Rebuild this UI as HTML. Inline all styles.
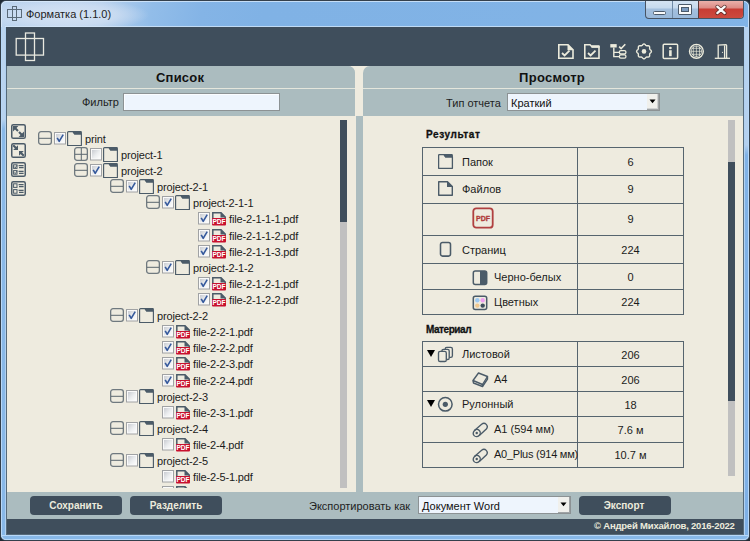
<!DOCTYPE html>
<html><head><meta charset="utf-8"><title>Форматка</title>
<style>
html,body{margin:0;padding:0;width:750px;height:541px;overflow:hidden;background:#202a34}
body{position:relative;font-family:"Liberation Sans", sans-serif}
</style></head><body>
<div style="position:absolute;left:0;top:0;width:750px;height:541px;background:#202a34"></div><div style="position:absolute;left:0px;top:0px;width:750px;height:541px;box-sizing:border-box;border:1px solid #34404c;border-radius:6px 6px 6px 6px;background:radial-gradient(ellipse 82px 17px at 66px 14px,rgba(214,228,244,0.95) 0%,rgba(206,222,242,0.8) 60%,rgba(200,218,240,0) 100%),linear-gradient(100deg,#bcd4ee 0px,#b6d0ed 100px,#92bde9 150px,#84b4e6 200px,#80b2e5 260px,#82b4e6 100%)"></div><div style="position:absolute;left:1px;top:1px;width:748px;height:539px;box-sizing:border-box;border:1px solid rgba(220,236,252,0.75);border-radius:5px 5px 5px 5px"></div><div style="position:absolute;left:1px;top:27px;width:5px;height:508px;background:linear-gradient(180deg,#bcd5ef 0px,#b8d3ef 92px,#8ab9e8 102px,#88b8e8 100%);border-left:1px solid #b8d8f8;border-right:1px solid #b0d0f0;box-sizing:border-box"></div><div style="position:absolute;left:744px;top:27px;width:5px;height:508px;background:linear-gradient(180deg,#b8d3ef 0px,#b4d0ee 118px,#80b2e6 128px,#7eb0e6 100%);border-left:1px solid #b0d0f0;border-right:1px solid #b8d8f8;box-sizing:border-box"></div><div style="position:absolute;left:1px;top:535px;width:748px;height:5px;background:#88b8e8;border-top:1px solid #b8d8f8;border-bottom:1px solid #b8d8f8;border-left:1px solid #b8d8f8;border-right:1px solid #b8d8f8;box-sizing:border-box;border-radius:0 0 5px 5px"></div><div style="position:absolute;left:5px;top:26px;width:740px;height:1px;background:rgba(214,232,250,0.75)"></div><svg style="position:absolute;left:7px;top:6px;" width="16" height="16" viewBox="0 0 16 16"><g fill="none" stroke="#5a6a78" stroke-width="1"><rect x="0.5" y="3.5" width="14" height="8"/><rect x="5.5" y="0.5" width="4" height="14"/></g></svg><div style="position:absolute;left:26px;top:9px;font-size:11px;font-weight:400;color:#1e1e1e;white-space:nowrap;line-height:1;">Форматка (1.1.0)</div><div style="position:absolute;left:645px;top:1px;width:99px;height:18px;box-sizing:border-box;border:1px solid #485464;border-top:none;border-radius:0 0 4px 4px;overflow:hidden;background:linear-gradient(180deg,#d4e3f2 0px,#c6daee 7px,#a4c0de 8px,#9ab9da 100%)"></div><div style="position:absolute;left:672px;top:1px;width:1px;height:17px;background:#6f8aa6"></div><div style="position:absolute;left:698px;top:1px;width:1px;height:17px;background:#5a3a3a"></div><div style="position:absolute;left:699px;top:1px;width:44px;height:17px;border-radius:0 0 3px 0;background:linear-gradient(180deg,#eab0aa 0px,#dc8a84 7px,#c83c34 8px,#cc4a3e 100%)"></div><div style="position:absolute;left:653px;top:11px;width:13px;height:4px;box-sizing:border-box;background:#fafafa;border:1px solid #4c5a6a;border-radius:1.5px"></div><div style="position:absolute;left:678px;top:4px;width:14px;height:11px;box-sizing:border-box;border:1px solid #4c5a6a;background:#fafafa;border-radius:1px"></div><div style="position:absolute;left:681px;top:7px;width:8px;height:5px;box-sizing:border-box;border:1px solid #4c5a6a;background:#7d9cc0"></div><svg style="position:absolute;left:714px;top:3px;" width="14" height="14" viewBox="0 0 14 14"><path d="M3.3 3.7 L10.7 10.1 M10.7 3.7 L3.3 10.1" stroke="#4a2622" stroke-width="3.9" stroke-linecap="round" stroke-opacity="0.85"/><path d="M3.3 3.7 L10.7 10.1 M10.7 3.7 L3.3 10.1" stroke="#fbfbfb" stroke-width="2.3" stroke-linecap="round"/></svg><div style="position:absolute;left:6px;top:27px;width:738px;height:508px;background:#eeebdf;box-sizing:border-box;border:1px solid #566a7a"></div><div style="position:absolute;left:6px;top:27px;width:738px;height:39px;background:#3f4e5c"></div><svg style="position:absolute;left:14px;top:31px;" width="32" height="32" viewBox="0 0 32 32"><g fill="none" stroke="#e9e9e0" stroke-width="1.3"><rect x="2.2" y="7.5" width="27.3" height="16.6"/><rect x="11.5" y="2" width="9" height="27.5"/></g></svg><svg style="position:absolute;left:557px;top:43px;" width="18" height="17" viewBox="0 0 18 17"><g fill="none" stroke="#ecebdc" stroke-width="1.6"><path d="M1.8 1.8 H11 L16 6.8 V15.2 H1.8 Z"/></g><path d="M10.5 1 L16.8 7.3 L10.5 7.3 Z" fill="#ecebdc"/><path d="M5 10 L7.6 12.5 L12.5 7.6" fill="none" stroke="#ecebdc" stroke-width="1.8"/></svg><svg style="position:absolute;left:583px;top:43px;" width="18" height="17" viewBox="0 0 18 17"><g fill="none" stroke="#ecebdc" stroke-width="1.6"><path d="M1.8 1.8 H7 L9 3.8 H16 V15.2 H1.8 Z"/></g><rect x="8.5" y="2.2" width="8" height="2.6" fill="#ecebdc"/><path d="M5 10 L7.6 12.5 L12.5 7.6" fill="none" stroke="#ecebdc" stroke-width="1.8"/></svg><svg style="position:absolute;left:609px;top:43px;" width="18" height="17" viewBox="0 0 18 17"><rect x="1.3" y="1.1" width="6.4" height="3.4" fill="#ecebdc"/><path d="M4.8 4.5 V13.6 H10.5 M4.8 9.4 H10.5" fill="none" stroke="#ecebdc" stroke-width="1.4"/><rect x="10.4" y="7.7" width="6.5" height="3.3" rx="1.4" fill="none" stroke="#ecebdc" stroke-width="1.3"/><rect x="10.4" y="11.9" width="6.5" height="3.3" rx="1.4" fill="none" stroke="#ecebdc" stroke-width="1.3"/><path d="M10.2 3.6 L12.1 5.6 L16.3 1.3" fill="none" stroke="#ecebdc" stroke-width="1.6"/></svg><svg style="position:absolute;left:635px;top:43px;" width="18" height="17" viewBox="0 0 18 17"><path d="M9.00 0.98 L9.29 1.02 L9.57 1.12 L9.84 1.29 L10.09 1.49 L10.33 1.73 L10.54 1.97 L10.75 2.21 L10.95 2.41 L11.15 2.57 L11.36 2.69 L11.60 2.76 L11.86 2.79 L12.14 2.78 L12.45 2.77 L12.78 2.75 L13.11 2.74 L13.44 2.77 L13.74 2.85 L14.02 2.97 L14.25 3.15 L14.43 3.38 L14.55 3.66 L14.63 3.96 L14.66 4.29 L14.65 4.62 L14.63 4.95 L14.62 5.26 L14.61 5.54 L14.64 5.80 L14.71 6.04 L14.83 6.25 L14.99 6.45 L15.19 6.65 L15.43 6.86 L15.67 7.07 L15.91 7.31 L16.11 7.56 L16.28 7.83 L16.38 8.11 L16.42 8.40 L16.38 8.69 L16.28 8.97 L16.11 9.24 L15.91 9.49 L15.67 9.73 L15.43 9.94 L15.19 10.15 L14.99 10.35 L14.83 10.55 L14.71 10.76 L14.64 11.00 L14.61 11.26 L14.62 11.54 L14.63 11.85 L14.65 12.18 L14.66 12.51 L14.63 12.84 L14.55 13.14 L14.43 13.42 L14.25 13.65 L14.02 13.83 L13.74 13.95 L13.44 14.03 L13.11 14.06 L12.78 14.05 L12.45 14.03 L12.14 14.02 L11.86 14.01 L11.60 14.04 L11.36 14.11 L11.15 14.23 L10.95 14.39 L10.75 14.59 L10.54 14.83 L10.33 15.07 L10.09 15.31 L9.84 15.51 L9.57 15.68 L9.29 15.78 L9.00 15.82 L8.71 15.78 L8.43 15.68 L8.16 15.51 L7.91 15.31 L7.67 15.07 L7.46 14.83 L7.25 14.59 L7.05 14.39 L6.85 14.23 L6.64 14.11 L6.40 14.04 L6.14 14.01 L5.86 14.02 L5.55 14.03 L5.22 14.05 L4.89 14.06 L4.56 14.03 L4.26 13.95 L3.98 13.83 L3.75 13.65 L3.57 13.42 L3.45 13.14 L3.37 12.84 L3.34 12.51 L3.35 12.18 L3.37 11.85 L3.38 11.54 L3.39 11.26 L3.36 11.00 L3.29 10.76 L3.17 10.55 L3.01 10.35 L2.81 10.15 L2.57 9.94 L2.33 9.73 L2.09 9.49 L1.89 9.24 L1.72 8.97 L1.62 8.69 L1.58 8.40 L1.62 8.11 L1.72 7.83 L1.89 7.56 L2.09 7.31 L2.33 7.07 L2.57 6.86 L2.81 6.65 L3.01 6.45 L3.17 6.25 L3.29 6.04 L3.36 5.80 L3.39 5.54 L3.38 5.26 L3.37 4.95 L3.35 4.62 L3.34 4.29 L3.37 3.96 L3.45 3.66 L3.57 3.38 L3.75 3.15 L3.98 2.97 L4.26 2.85 L4.56 2.77 L4.89 2.74 L5.22 2.75 L5.55 2.77 L5.86 2.78 L6.14 2.79 L6.40 2.76 L6.64 2.69 L6.85 2.57 L7.05 2.41 L7.25 2.21 L7.46 1.97 L7.67 1.73 L7.91 1.49 L8.16 1.29 L8.43 1.12 L8.71 1.02 Z" fill="none" stroke="#ecebdc" stroke-width="1.35" stroke-linejoin="round"/><circle cx="9" cy="8.4" r="2.3" fill="#ecebdc"/></svg><svg style="position:absolute;left:662px;top:43px;" width="17" height="17" viewBox="0 0 17 17"><rect x="1.2" y="1.2" width="14.4" height="14.4" rx="1" fill="none" stroke="#ecebdc" stroke-width="1.5"/><circle cx="8.4" cy="5" r="1.35" fill="#ecebdc"/><rect x="7.1" y="7.2" width="2.6" height="6" fill="#ecebdc"/></svg><svg style="position:absolute;left:688px;top:43px;" width="17" height="17" viewBox="0 0 17 17"><defs><clipPath id="gc"><circle cx="8.4" cy="8.3" r="5.8"/></clipPath></defs><g fill="none" stroke="#ecebdc"><circle cx="8.4" cy="8.3" r="6.9" stroke-width="1.4"/><circle cx="8.4" cy="8.3" r="5.2" stroke-width="0.7"/><g clip-path="url(#gc)" stroke-width="0.75" stroke-opacity="0.9"><path d="M5.3 0 V17 M8.4 0 V17 M11.5 0 V17 M0 5.3 H17 M0 8.3 H17 M0 11.3 H17"/></g></g></svg><svg style="position:absolute;left:714px;top:43px;" width="17" height="17" viewBox="0 0 17 17"><g fill="none" stroke="#ecebdc" stroke-width="1.3"><path d="M4.2 15.3 V2.2 L12 1.6 L12.6 2.4 V15.3"/><path d="M0.8 15.3 H16"/><path d="M10.6 2.4 V15.3"/></g><circle cx="8.5" cy="9.3" r="0.6" fill="#ecebdc"/></svg><div style="position:absolute;left:7px;top:66px;width:348px;height:50px;background:#abbcbf;border-top-right-radius:7px"></div><div style="position:absolute;left:363px;top:66px;width:380px;height:50px;background:#abbcbf;border-top-left-radius:7px"></div><div style="position:absolute;left:355px;top:66px;width:8px;height:50px;background:#eeebdf"></div><div style="position:absolute;left:7px;top:66px;width:348px;height:50px;background:#abbcbf;border-top-right-radius:7px"></div><div style="position:absolute;left:7px;top:88px;width:348px;height:1px;background:#e4e6dc"></div><div style="position:absolute;left:363px;top:88px;width:380px;height:1px;background:#e4e6dc"></div><div style="position:absolute;left:156px;top:71px;font-size:13px;font-weight:700;color:#111;white-space:nowrap;line-height:1;letter-spacing:0.2px">Список</div><div style="position:absolute;left:519px;top:71px;font-size:13px;font-weight:700;color:#111;white-space:nowrap;line-height:1;letter-spacing:0.3px">Просмотр</div><div style="position:absolute;left:82px;top:97px;font-size:11px;font-weight:400;color:#1e1e1e;white-space:nowrap;line-height:1;">Фильтр</div><div style="position:absolute;left:123px;top:93px;width:157px;height:18px;box-sizing:border-box;border:1px solid #8c9294;background:#eef5fd;box-shadow:inset 1px 1px 0 #fbfdff"></div><div style="position:absolute;left:446px;top:98px;font-size:11px;font-weight:400;color:#1e1e1e;white-space:nowrap;line-height:1;">Тип отчета</div><div style="position:absolute;left:507px;top:93px;width:153px;height:18px;box-sizing:border-box;border:1px solid #8c9294;background:#eef5fd"></div><div style="position:absolute;left:511px;top:98px;font-size:11px;font-weight:400;color:#111;white-space:nowrap;line-height:1;">Краткий</div><div style="position:absolute;left:647px;top:94px;width:12px;height:16px;box-sizing:border-box;background:#f0f0ec;border-right:1px solid #a0a4a6;border-bottom:1px solid #a0a4a6;box-shadow:inset -1px -1px 0 #d0d2d2"></div><svg style="position:absolute;left:649px;top:99px;" width="7" height="5" viewBox="0 0 7 5"><path d="M0.5 0.5 H6.5 L3.5 4.2 Z" fill="#000"/></svg><div style="position:absolute;left:356px;top:116px;width:7px;height:376px;background:#abbcbf"></div><div style="position:absolute;left:340px;top:120px;width:7px;height:368px;background:#c0c0c0"></div><div style="position:absolute;left:340px;top:120px;width:7px;height:102px;background:#3f4e5c"></div><div style="position:absolute;left:728px;top:120px;width:7px;height:356px;background:#c0c0c0"></div><div style="position:absolute;left:728px;top:162px;width:7px;height:239px;background:#3f4e5c"></div><svg style="position:absolute;left:11px;top:124px;" width="15" height="15" viewBox="0 0 15 15"><rect x="0.75" y="0.75" width="13.5" height="13.5" rx="1.6" fill="none" stroke="#4b5b68" stroke-width="1.5"/><path d="M4 4 L7 7 M8 8 L11 11" stroke="#4b5b68" stroke-width="2.1"/><path d="M2 2 H7.4 L2 7.4 Z M13 13 H7.6 L13 7.6 Z" fill="#4b5b68"/></svg><svg style="position:absolute;left:11px;top:143px;" width="15" height="15" viewBox="0 0 15 15"><rect x="0.75" y="0.75" width="13.5" height="13.5" rx="1.6" fill="none" stroke="#4b5b68" stroke-width="1.5"/><path d="M2.2 2.2 L5 5 M12.8 12.8 L10 10" stroke="#4b5b68" stroke-width="2.1"/><path d="M7 7 H2.2 L7 2.2 Z M8 8 H12.8 L8 12.8 Z" fill="#4b5b68"/></svg><svg style="position:absolute;left:11px;top:162px;" width="15" height="15" viewBox="0 0 15 15"><rect x="0.75" y="0.75" width="13.5" height="13.5" rx="1.6" fill="none" stroke="#4b5b68" stroke-width="1.5"/><rect x="2.6" y="2.8" width="3.4" height="3.6" fill="none" stroke="#4b5b68" stroke-width="1"/><rect x="2.6" y="8.6" width="3.4" height="3.6" fill="none" stroke="#4b5b68" stroke-width="1"/><path d="M3.2 4.6 L4.3 5.8 L6.2 3 M3.2 10.4 L4.3 11.6 L6.2 8.8" stroke="#4b5b68" stroke-width="0.9" fill="none"/><path d="M7.6 3.6 H12.6 M8 5.6 H12.6 M7.6 9.4 H12.6 M8 11.4 H12.6" stroke="#4b5b68" stroke-width="1.3"/></svg><svg style="position:absolute;left:11px;top:181px;" width="15" height="15" viewBox="0 0 15 15"><rect x="0.75" y="0.75" width="13.5" height="13.5" rx="1.6" fill="none" stroke="#4b5b68" stroke-width="1.5"/><rect x="2.6" y="2.8" width="3.4" height="3.6" fill="none" stroke="#4b5b68" stroke-width="1"/><rect x="2.6" y="8.6" width="3.4" height="3.6" fill="none" stroke="#4b5b68" stroke-width="1"/><path d="M7.6 3.6 H12.6 M8 5.6 H12.6 M7.6 9.4 H12.6 M8 11.4 H12.6" stroke="#4b5b68" stroke-width="1.3"/></svg><div style="position:absolute;left:7px;top:116px;width:330px;height:372px;overflow:hidden"><svg style="position:absolute;left:31px;top:15px;" width="14" height="14" viewBox="0 0 14 14"><rect x="0.65" y="0.65" width="12.7" height="12.7" rx="2.4" fill="none" stroke="#6f797f" stroke-width="1.3"/><path d="M1 7.3 H13" stroke="#5b676e" stroke-width="1"/></svg><svg style="position:absolute;left:47px;top:16px;" width="12" height="12.5" viewBox="0 0 12 12.5"><defs><linearGradient id="cg" x1="0" y1="0" x2="1" y2="1"><stop offset="0" stop-color="#c9ccd2"/><stop offset="0.55" stop-color="#eceef0"/><stop offset="1" stop-color="#fdfdfd"/></linearGradient></defs><rect x="0.5" y="0.5" width="11" height="11.5" fill="#fafafa" stroke="#a0a2a4" stroke-width="1"/><rect x="2" y="2" width="8" height="8.5" fill="url(#cg)"/><path d="M3.2 5.8 L5.2 9.4 L9.2 2.6" fill="none" stroke="#35599c" stroke-width="1.6" stroke-linejoin="round"/></svg><svg style="position:absolute;left:60px;top:15px;" width="16" height="16" viewBox="0 0 16 16"><path d="M0.6 14.5 V1.6 Q0.6 0.6 1.6 0.6 H5.8 L7.6 2.9 H14.4 V14.5 Z" fill="none" stroke="#4b5b68" stroke-width="1.15" stroke-linejoin="round"/><path d="M5.4 0.1 H13.8 Q14.9 0.1 14.9 1.2 V3.5 H7.3 Z" fill="#4b5b68"/></svg><div style="position:absolute;left:78px;top:17.5px;font-size:11px;font-weight:400;color:#1b1b1b;white-space:nowrap;line-height:1;letter-spacing:-0.15px">print</div><svg style="position:absolute;left:67px;top:31px;" width="14" height="14" viewBox="0 0 14 14"><rect x="0.65" y="0.65" width="12.7" height="12.7" rx="2.4" fill="none" stroke="#6f797f" stroke-width="1.3"/><path d="M1 7.3 H13" stroke="#5b676e" stroke-width="1"/><path d="M7.3 1 V13" stroke="#5b676e" stroke-width="1"/></svg><svg style="position:absolute;left:83px;top:32px;" width="12" height="12.5" viewBox="0 0 12 12.5"><defs><linearGradient id="cg" x1="0" y1="0" x2="1" y2="1"><stop offset="0" stop-color="#c9ccd2"/><stop offset="0.55" stop-color="#eceef0"/><stop offset="1" stop-color="#fdfdfd"/></linearGradient></defs><rect x="0.5" y="0.5" width="11" height="11.5" fill="#fafafa" stroke="#a0a2a4" stroke-width="1"/><rect x="2" y="2" width="8" height="8.5" fill="url(#cg)"/></svg><svg style="position:absolute;left:96px;top:31px;" width="16" height="16" viewBox="0 0 16 16"><path d="M0.6 14.5 V1.6 Q0.6 0.6 1.6 0.6 H5.8 L7.6 2.9 H14.4 V14.5 Z" fill="none" stroke="#4b5b68" stroke-width="1.15" stroke-linejoin="round"/><path d="M5.4 0.1 H13.8 Q14.9 0.1 14.9 1.2 V3.5 H7.3 Z" fill="#4b5b68"/></svg><div style="position:absolute;left:114px;top:33.5px;font-size:11px;font-weight:400;color:#1b1b1b;white-space:nowrap;line-height:1;letter-spacing:-0.15px">project-1</div><svg style="position:absolute;left:67px;top:47px;" width="14" height="14" viewBox="0 0 14 14"><rect x="0.65" y="0.65" width="12.7" height="12.7" rx="2.4" fill="none" stroke="#6f797f" stroke-width="1.3"/><path d="M1 7.3 H13" stroke="#5b676e" stroke-width="1"/></svg><svg style="position:absolute;left:83px;top:48px;" width="12" height="12.5" viewBox="0 0 12 12.5"><defs><linearGradient id="cg" x1="0" y1="0" x2="1" y2="1"><stop offset="0" stop-color="#c9ccd2"/><stop offset="0.55" stop-color="#eceef0"/><stop offset="1" stop-color="#fdfdfd"/></linearGradient></defs><rect x="0.5" y="0.5" width="11" height="11.5" fill="#fafafa" stroke="#a0a2a4" stroke-width="1"/><rect x="2" y="2" width="8" height="8.5" fill="url(#cg)"/><path d="M3.2 5.8 L5.2 9.4 L9.2 2.6" fill="none" stroke="#35599c" stroke-width="1.6" stroke-linejoin="round"/></svg><svg style="position:absolute;left:96px;top:47px;" width="16" height="16" viewBox="0 0 16 16"><path d="M0.6 14.5 V1.6 Q0.6 0.6 1.6 0.6 H5.8 L7.6 2.9 H14.4 V14.5 Z" fill="none" stroke="#4b5b68" stroke-width="1.15" stroke-linejoin="round"/><path d="M5.4 0.1 H13.8 Q14.9 0.1 14.9 1.2 V3.5 H7.3 Z" fill="#4b5b68"/></svg><div style="position:absolute;left:114px;top:49.5px;font-size:11px;font-weight:400;color:#1b1b1b;white-space:nowrap;line-height:1;letter-spacing:-0.15px">project-2</div><svg style="position:absolute;left:103px;top:63px;" width="14" height="14" viewBox="0 0 14 14"><rect x="0.65" y="0.65" width="12.7" height="12.7" rx="2.4" fill="none" stroke="#6f797f" stroke-width="1.3"/><path d="M1 7.3 H13" stroke="#5b676e" stroke-width="1"/></svg><svg style="position:absolute;left:119px;top:64px;" width="12" height="12.5" viewBox="0 0 12 12.5"><defs><linearGradient id="cg" x1="0" y1="0" x2="1" y2="1"><stop offset="0" stop-color="#c9ccd2"/><stop offset="0.55" stop-color="#eceef0"/><stop offset="1" stop-color="#fdfdfd"/></linearGradient></defs><rect x="0.5" y="0.5" width="11" height="11.5" fill="#fafafa" stroke="#a0a2a4" stroke-width="1"/><rect x="2" y="2" width="8" height="8.5" fill="url(#cg)"/><path d="M3.2 5.8 L5.2 9.4 L9.2 2.6" fill="none" stroke="#35599c" stroke-width="1.6" stroke-linejoin="round"/></svg><svg style="position:absolute;left:132px;top:63px;" width="16" height="16" viewBox="0 0 16 16"><path d="M0.6 14.5 V1.6 Q0.6 0.6 1.6 0.6 H5.8 L7.6 2.9 H14.4 V14.5 Z" fill="none" stroke="#4b5b68" stroke-width="1.15" stroke-linejoin="round"/><path d="M5.4 0.1 H13.8 Q14.9 0.1 14.9 1.2 V3.5 H7.3 Z" fill="#4b5b68"/></svg><div style="position:absolute;left:150px;top:65.5px;font-size:11px;font-weight:400;color:#1b1b1b;white-space:nowrap;line-height:1;letter-spacing:-0.15px">project-2-1</div><svg style="position:absolute;left:139px;top:79px;" width="14" height="14" viewBox="0 0 14 14"><rect x="0.65" y="0.65" width="12.7" height="12.7" rx="2.4" fill="none" stroke="#6f797f" stroke-width="1.3"/><path d="M1 7.3 H13" stroke="#5b676e" stroke-width="1"/></svg><svg style="position:absolute;left:155px;top:80px;" width="12" height="12.5" viewBox="0 0 12 12.5"><defs><linearGradient id="cg" x1="0" y1="0" x2="1" y2="1"><stop offset="0" stop-color="#c9ccd2"/><stop offset="0.55" stop-color="#eceef0"/><stop offset="1" stop-color="#fdfdfd"/></linearGradient></defs><rect x="0.5" y="0.5" width="11" height="11.5" fill="#fafafa" stroke="#a0a2a4" stroke-width="1"/><rect x="2" y="2" width="8" height="8.5" fill="url(#cg)"/><path d="M3.2 5.8 L5.2 9.4 L9.2 2.6" fill="none" stroke="#35599c" stroke-width="1.6" stroke-linejoin="round"/></svg><svg style="position:absolute;left:168px;top:79px;" width="16" height="16" viewBox="0 0 16 16"><path d="M0.6 14.5 V1.6 Q0.6 0.6 1.6 0.6 H5.8 L7.6 2.9 H14.4 V14.5 Z" fill="none" stroke="#4b5b68" stroke-width="1.15" stroke-linejoin="round"/><path d="M5.4 0.1 H13.8 Q14.9 0.1 14.9 1.2 V3.5 H7.3 Z" fill="#4b5b68"/></svg><div style="position:absolute;left:186px;top:81.5px;font-size:11px;font-weight:400;color:#1b1b1b;white-space:nowrap;line-height:1;letter-spacing:-0.15px">project-2-1-1</div><svg style="position:absolute;left:191px;top:96px;" width="12" height="12.5" viewBox="0 0 12 12.5"><defs><linearGradient id="cg" x1="0" y1="0" x2="1" y2="1"><stop offset="0" stop-color="#c9ccd2"/><stop offset="0.55" stop-color="#eceef0"/><stop offset="1" stop-color="#fdfdfd"/></linearGradient></defs><rect x="0.5" y="0.5" width="11" height="11.5" fill="#fafafa" stroke="#a0a2a4" stroke-width="1"/><rect x="2" y="2" width="8" height="8.5" fill="url(#cg)"/><path d="M3.2 5.8 L5.2 9.4 L9.2 2.6" fill="none" stroke="#35599c" stroke-width="1.6" stroke-linejoin="round"/></svg><svg style="position:absolute;left:205px;top:96px;" width="14" height="14" viewBox="0 0 14 14"><path d="M0.8 7 V0.8 H9 L13.2 5 V7" fill="none" stroke="#4b5b68" stroke-width="1.5"/><path d="M8.5 0 L14 5.5 H8.5 Z" fill="#4b5b68"/><rect x="0" y="6" width="14" height="7.5" rx="1" fill="#c8102e"/><text x="7" y="12.4" font-family="Liberation Sans" font-weight="700" font-size="6.6" fill="#fff" text-anchor="middle">PDF</text></svg><div style="position:absolute;left:222px;top:97.5px;font-size:11px;font-weight:400;color:#1b1b1b;white-space:nowrap;line-height:1;letter-spacing:-0.15px">file-2-1-1-1.pdf</div><svg style="position:absolute;left:191px;top:113px;" width="12" height="12.5" viewBox="0 0 12 12.5"><defs><linearGradient id="cg" x1="0" y1="0" x2="1" y2="1"><stop offset="0" stop-color="#c9ccd2"/><stop offset="0.55" stop-color="#eceef0"/><stop offset="1" stop-color="#fdfdfd"/></linearGradient></defs><rect x="0.5" y="0.5" width="11" height="11.5" fill="#fafafa" stroke="#a0a2a4" stroke-width="1"/><rect x="2" y="2" width="8" height="8.5" fill="url(#cg)"/><path d="M3.2 5.8 L5.2 9.4 L9.2 2.6" fill="none" stroke="#35599c" stroke-width="1.6" stroke-linejoin="round"/></svg><svg style="position:absolute;left:205px;top:113px;" width="14" height="14" viewBox="0 0 14 14"><path d="M0.8 7 V0.8 H9 L13.2 5 V7" fill="none" stroke="#4b5b68" stroke-width="1.5"/><path d="M8.5 0 L14 5.5 H8.5 Z" fill="#4b5b68"/><rect x="0" y="6" width="14" height="7.5" rx="1" fill="#c8102e"/><text x="7" y="12.4" font-family="Liberation Sans" font-weight="700" font-size="6.6" fill="#fff" text-anchor="middle">PDF</text></svg><div style="position:absolute;left:222px;top:114.5px;font-size:11px;font-weight:400;color:#1b1b1b;white-space:nowrap;line-height:1;letter-spacing:-0.15px">file-2-1-1-2.pdf</div><svg style="position:absolute;left:191px;top:129px;" width="12" height="12.5" viewBox="0 0 12 12.5"><defs><linearGradient id="cg" x1="0" y1="0" x2="1" y2="1"><stop offset="0" stop-color="#c9ccd2"/><stop offset="0.55" stop-color="#eceef0"/><stop offset="1" stop-color="#fdfdfd"/></linearGradient></defs><rect x="0.5" y="0.5" width="11" height="11.5" fill="#fafafa" stroke="#a0a2a4" stroke-width="1"/><rect x="2" y="2" width="8" height="8.5" fill="url(#cg)"/><path d="M3.2 5.8 L5.2 9.4 L9.2 2.6" fill="none" stroke="#35599c" stroke-width="1.6" stroke-linejoin="round"/></svg><svg style="position:absolute;left:205px;top:129px;" width="14" height="14" viewBox="0 0 14 14"><path d="M0.8 7 V0.8 H9 L13.2 5 V7" fill="none" stroke="#4b5b68" stroke-width="1.5"/><path d="M8.5 0 L14 5.5 H8.5 Z" fill="#4b5b68"/><rect x="0" y="6" width="14" height="7.5" rx="1" fill="#c8102e"/><text x="7" y="12.4" font-family="Liberation Sans" font-weight="700" font-size="6.6" fill="#fff" text-anchor="middle">PDF</text></svg><div style="position:absolute;left:222px;top:130.5px;font-size:11px;font-weight:400;color:#1b1b1b;white-space:nowrap;line-height:1;letter-spacing:-0.15px">file-2-1-1-3.pdf</div><svg style="position:absolute;left:139px;top:144px;" width="14" height="14" viewBox="0 0 14 14"><rect x="0.65" y="0.65" width="12.7" height="12.7" rx="2.4" fill="none" stroke="#6f797f" stroke-width="1.3"/><path d="M1 7.3 H13" stroke="#5b676e" stroke-width="1"/></svg><svg style="position:absolute;left:155px;top:145px;" width="12" height="12.5" viewBox="0 0 12 12.5"><defs><linearGradient id="cg" x1="0" y1="0" x2="1" y2="1"><stop offset="0" stop-color="#c9ccd2"/><stop offset="0.55" stop-color="#eceef0"/><stop offset="1" stop-color="#fdfdfd"/></linearGradient></defs><rect x="0.5" y="0.5" width="11" height="11.5" fill="#fafafa" stroke="#a0a2a4" stroke-width="1"/><rect x="2" y="2" width="8" height="8.5" fill="url(#cg)"/><path d="M3.2 5.8 L5.2 9.4 L9.2 2.6" fill="none" stroke="#35599c" stroke-width="1.6" stroke-linejoin="round"/></svg><svg style="position:absolute;left:168px;top:144px;" width="16" height="16" viewBox="0 0 16 16"><path d="M0.6 14.5 V1.6 Q0.6 0.6 1.6 0.6 H5.8 L7.6 2.9 H14.4 V14.5 Z" fill="none" stroke="#4b5b68" stroke-width="1.15" stroke-linejoin="round"/><path d="M5.4 0.1 H13.8 Q14.9 0.1 14.9 1.2 V3.5 H7.3 Z" fill="#4b5b68"/></svg><div style="position:absolute;left:186px;top:146.5px;font-size:11px;font-weight:400;color:#1b1b1b;white-space:nowrap;line-height:1;letter-spacing:-0.15px">project-2-1-2</div><svg style="position:absolute;left:191px;top:161px;" width="12" height="12.5" viewBox="0 0 12 12.5"><defs><linearGradient id="cg" x1="0" y1="0" x2="1" y2="1"><stop offset="0" stop-color="#c9ccd2"/><stop offset="0.55" stop-color="#eceef0"/><stop offset="1" stop-color="#fdfdfd"/></linearGradient></defs><rect x="0.5" y="0.5" width="11" height="11.5" fill="#fafafa" stroke="#a0a2a4" stroke-width="1"/><rect x="2" y="2" width="8" height="8.5" fill="url(#cg)"/><path d="M3.2 5.8 L5.2 9.4 L9.2 2.6" fill="none" stroke="#35599c" stroke-width="1.6" stroke-linejoin="round"/></svg><svg style="position:absolute;left:205px;top:161px;" width="14" height="14" viewBox="0 0 14 14"><path d="M0.8 7 V0.8 H9 L13.2 5 V7" fill="none" stroke="#4b5b68" stroke-width="1.5"/><path d="M8.5 0 L14 5.5 H8.5 Z" fill="#4b5b68"/><rect x="0" y="6" width="14" height="7.5" rx="1" fill="#c8102e"/><text x="7" y="12.4" font-family="Liberation Sans" font-weight="700" font-size="6.6" fill="#fff" text-anchor="middle">PDF</text></svg><div style="position:absolute;left:222px;top:162.5px;font-size:11px;font-weight:400;color:#1b1b1b;white-space:nowrap;line-height:1;letter-spacing:-0.15px">file-2-1-2-1.pdf</div><svg style="position:absolute;left:191px;top:177px;" width="12" height="12.5" viewBox="0 0 12 12.5"><defs><linearGradient id="cg" x1="0" y1="0" x2="1" y2="1"><stop offset="0" stop-color="#c9ccd2"/><stop offset="0.55" stop-color="#eceef0"/><stop offset="1" stop-color="#fdfdfd"/></linearGradient></defs><rect x="0.5" y="0.5" width="11" height="11.5" fill="#fafafa" stroke="#a0a2a4" stroke-width="1"/><rect x="2" y="2" width="8" height="8.5" fill="url(#cg)"/><path d="M3.2 5.8 L5.2 9.4 L9.2 2.6" fill="none" stroke="#35599c" stroke-width="1.6" stroke-linejoin="round"/></svg><svg style="position:absolute;left:205px;top:177px;" width="14" height="14" viewBox="0 0 14 14"><path d="M0.8 7 V0.8 H9 L13.2 5 V7" fill="none" stroke="#4b5b68" stroke-width="1.5"/><path d="M8.5 0 L14 5.5 H8.5 Z" fill="#4b5b68"/><rect x="0" y="6" width="14" height="7.5" rx="1" fill="#c8102e"/><text x="7" y="12.4" font-family="Liberation Sans" font-weight="700" font-size="6.6" fill="#fff" text-anchor="middle">PDF</text></svg><div style="position:absolute;left:222px;top:178.5px;font-size:11px;font-weight:400;color:#1b1b1b;white-space:nowrap;line-height:1;letter-spacing:-0.15px">file-2-1-2-2.pdf</div><svg style="position:absolute;left:103px;top:192px;" width="14" height="14" viewBox="0 0 14 14"><rect x="0.65" y="0.65" width="12.7" height="12.7" rx="2.4" fill="none" stroke="#6f797f" stroke-width="1.3"/><path d="M1 7.3 H13" stroke="#5b676e" stroke-width="1"/></svg><svg style="position:absolute;left:119px;top:193px;" width="12" height="12.5" viewBox="0 0 12 12.5"><defs><linearGradient id="cg" x1="0" y1="0" x2="1" y2="1"><stop offset="0" stop-color="#c9ccd2"/><stop offset="0.55" stop-color="#eceef0"/><stop offset="1" stop-color="#fdfdfd"/></linearGradient></defs><rect x="0.5" y="0.5" width="11" height="11.5" fill="#fafafa" stroke="#a0a2a4" stroke-width="1"/><rect x="2" y="2" width="8" height="8.5" fill="url(#cg)"/><path d="M3.2 5.8 L5.2 9.4 L9.2 2.6" fill="none" stroke="#35599c" stroke-width="1.6" stroke-linejoin="round"/></svg><svg style="position:absolute;left:132px;top:192px;" width="16" height="16" viewBox="0 0 16 16"><path d="M0.6 14.5 V1.6 Q0.6 0.6 1.6 0.6 H5.8 L7.6 2.9 H14.4 V14.5 Z" fill="none" stroke="#4b5b68" stroke-width="1.15" stroke-linejoin="round"/><path d="M5.4 0.1 H13.8 Q14.9 0.1 14.9 1.2 V3.5 H7.3 Z" fill="#4b5b68"/></svg><div style="position:absolute;left:150px;top:194.5px;font-size:11px;font-weight:400;color:#1b1b1b;white-space:nowrap;line-height:1;letter-spacing:-0.15px">project-2-2</div><svg style="position:absolute;left:155px;top:209px;" width="12" height="12.5" viewBox="0 0 12 12.5"><defs><linearGradient id="cg" x1="0" y1="0" x2="1" y2="1"><stop offset="0" stop-color="#c9ccd2"/><stop offset="0.55" stop-color="#eceef0"/><stop offset="1" stop-color="#fdfdfd"/></linearGradient></defs><rect x="0.5" y="0.5" width="11" height="11.5" fill="#fafafa" stroke="#a0a2a4" stroke-width="1"/><rect x="2" y="2" width="8" height="8.5" fill="url(#cg)"/><path d="M3.2 5.8 L5.2 9.4 L9.2 2.6" fill="none" stroke="#35599c" stroke-width="1.6" stroke-linejoin="round"/></svg><svg style="position:absolute;left:169px;top:209px;" width="14" height="14" viewBox="0 0 14 14"><path d="M0.8 7 V0.8 H9 L13.2 5 V7" fill="none" stroke="#4b5b68" stroke-width="1.5"/><path d="M8.5 0 L14 5.5 H8.5 Z" fill="#4b5b68"/><rect x="0" y="6" width="14" height="7.5" rx="1" fill="#c8102e"/><text x="7" y="12.4" font-family="Liberation Sans" font-weight="700" font-size="6.6" fill="#fff" text-anchor="middle">PDF</text></svg><div style="position:absolute;left:186px;top:210.5px;font-size:11px;font-weight:400;color:#1b1b1b;white-space:nowrap;line-height:1;letter-spacing:-0.15px">file-2-2-1.pdf</div><svg style="position:absolute;left:155px;top:225px;" width="12" height="12.5" viewBox="0 0 12 12.5"><defs><linearGradient id="cg" x1="0" y1="0" x2="1" y2="1"><stop offset="0" stop-color="#c9ccd2"/><stop offset="0.55" stop-color="#eceef0"/><stop offset="1" stop-color="#fdfdfd"/></linearGradient></defs><rect x="0.5" y="0.5" width="11" height="11.5" fill="#fafafa" stroke="#a0a2a4" stroke-width="1"/><rect x="2" y="2" width="8" height="8.5" fill="url(#cg)"/><path d="M3.2 5.8 L5.2 9.4 L9.2 2.6" fill="none" stroke="#35599c" stroke-width="1.6" stroke-linejoin="round"/></svg><svg style="position:absolute;left:169px;top:225px;" width="14" height="14" viewBox="0 0 14 14"><path d="M0.8 7 V0.8 H9 L13.2 5 V7" fill="none" stroke="#4b5b68" stroke-width="1.5"/><path d="M8.5 0 L14 5.5 H8.5 Z" fill="#4b5b68"/><rect x="0" y="6" width="14" height="7.5" rx="1" fill="#c8102e"/><text x="7" y="12.4" font-family="Liberation Sans" font-weight="700" font-size="6.6" fill="#fff" text-anchor="middle">PDF</text></svg><div style="position:absolute;left:186px;top:226.5px;font-size:11px;font-weight:400;color:#1b1b1b;white-space:nowrap;line-height:1;letter-spacing:-0.15px">file-2-2-2.pdf</div><svg style="position:absolute;left:155px;top:241px;" width="12" height="12.5" viewBox="0 0 12 12.5"><defs><linearGradient id="cg" x1="0" y1="0" x2="1" y2="1"><stop offset="0" stop-color="#c9ccd2"/><stop offset="0.55" stop-color="#eceef0"/><stop offset="1" stop-color="#fdfdfd"/></linearGradient></defs><rect x="0.5" y="0.5" width="11" height="11.5" fill="#fafafa" stroke="#a0a2a4" stroke-width="1"/><rect x="2" y="2" width="8" height="8.5" fill="url(#cg)"/><path d="M3.2 5.8 L5.2 9.4 L9.2 2.6" fill="none" stroke="#35599c" stroke-width="1.6" stroke-linejoin="round"/></svg><svg style="position:absolute;left:169px;top:241px;" width="14" height="14" viewBox="0 0 14 14"><path d="M0.8 7 V0.8 H9 L13.2 5 V7" fill="none" stroke="#4b5b68" stroke-width="1.5"/><path d="M8.5 0 L14 5.5 H8.5 Z" fill="#4b5b68"/><rect x="0" y="6" width="14" height="7.5" rx="1" fill="#c8102e"/><text x="7" y="12.4" font-family="Liberation Sans" font-weight="700" font-size="6.6" fill="#fff" text-anchor="middle">PDF</text></svg><div style="position:absolute;left:186px;top:242.5px;font-size:11px;font-weight:400;color:#1b1b1b;white-space:nowrap;line-height:1;letter-spacing:-0.15px">file-2-2-3.pdf</div><svg style="position:absolute;left:155px;top:258px;" width="12" height="12.5" viewBox="0 0 12 12.5"><defs><linearGradient id="cg" x1="0" y1="0" x2="1" y2="1"><stop offset="0" stop-color="#c9ccd2"/><stop offset="0.55" stop-color="#eceef0"/><stop offset="1" stop-color="#fdfdfd"/></linearGradient></defs><rect x="0.5" y="0.5" width="11" height="11.5" fill="#fafafa" stroke="#a0a2a4" stroke-width="1"/><rect x="2" y="2" width="8" height="8.5" fill="url(#cg)"/><path d="M3.2 5.8 L5.2 9.4 L9.2 2.6" fill="none" stroke="#35599c" stroke-width="1.6" stroke-linejoin="round"/></svg><svg style="position:absolute;left:169px;top:258px;" width="14" height="14" viewBox="0 0 14 14"><path d="M0.8 7 V0.8 H9 L13.2 5 V7" fill="none" stroke="#4b5b68" stroke-width="1.5"/><path d="M8.5 0 L14 5.5 H8.5 Z" fill="#4b5b68"/><rect x="0" y="6" width="14" height="7.5" rx="1" fill="#c8102e"/><text x="7" y="12.4" font-family="Liberation Sans" font-weight="700" font-size="6.6" fill="#fff" text-anchor="middle">PDF</text></svg><div style="position:absolute;left:186px;top:259.5px;font-size:11px;font-weight:400;color:#1b1b1b;white-space:nowrap;line-height:1;letter-spacing:-0.15px">file-2-2-4.pdf</div><svg style="position:absolute;left:103px;top:273px;" width="14" height="14" viewBox="0 0 14 14"><rect x="0.65" y="0.65" width="12.7" height="12.7" rx="2.4" fill="none" stroke="#6f797f" stroke-width="1.3"/><path d="M1 7.3 H13" stroke="#5b676e" stroke-width="1"/></svg><svg style="position:absolute;left:119px;top:274px;" width="12" height="12.5" viewBox="0 0 12 12.5"><defs><linearGradient id="cg" x1="0" y1="0" x2="1" y2="1"><stop offset="0" stop-color="#c9ccd2"/><stop offset="0.55" stop-color="#eceef0"/><stop offset="1" stop-color="#fdfdfd"/></linearGradient></defs><rect x="0.5" y="0.5" width="11" height="11.5" fill="#fafafa" stroke="#a0a2a4" stroke-width="1"/><rect x="2" y="2" width="8" height="8.5" fill="url(#cg)"/></svg><svg style="position:absolute;left:132px;top:273px;" width="16" height="16" viewBox="0 0 16 16"><path d="M0.6 14.5 V1.6 Q0.6 0.6 1.6 0.6 H5.8 L7.6 2.9 H14.4 V14.5 Z" fill="none" stroke="#4b5b68" stroke-width="1.15" stroke-linejoin="round"/><path d="M5.4 0.1 H13.8 Q14.9 0.1 14.9 1.2 V3.5 H7.3 Z" fill="#4b5b68"/></svg><div style="position:absolute;left:150px;top:275.5px;font-size:11px;font-weight:400;color:#1b1b1b;white-space:nowrap;line-height:1;letter-spacing:-0.15px">project-2-3</div><svg style="position:absolute;left:155px;top:290px;" width="12" height="12.5" viewBox="0 0 12 12.5"><defs><linearGradient id="cg" x1="0" y1="0" x2="1" y2="1"><stop offset="0" stop-color="#c9ccd2"/><stop offset="0.55" stop-color="#eceef0"/><stop offset="1" stop-color="#fdfdfd"/></linearGradient></defs><rect x="0.5" y="0.5" width="11" height="11.5" fill="#fafafa" stroke="#a0a2a4" stroke-width="1"/><rect x="2" y="2" width="8" height="8.5" fill="url(#cg)"/></svg><svg style="position:absolute;left:169px;top:290px;" width="14" height="14" viewBox="0 0 14 14"><path d="M0.8 7 V0.8 H9 L13.2 5 V7" fill="none" stroke="#4b5b68" stroke-width="1.5"/><path d="M8.5 0 L14 5.5 H8.5 Z" fill="#4b5b68"/><rect x="0" y="6" width="14" height="7.5" rx="1" fill="#c8102e"/><text x="7" y="12.4" font-family="Liberation Sans" font-weight="700" font-size="6.6" fill="#fff" text-anchor="middle">PDF</text></svg><div style="position:absolute;left:186px;top:291.5px;font-size:11px;font-weight:400;color:#1b1b1b;white-space:nowrap;line-height:1;letter-spacing:-0.15px">file-2-3-1.pdf</div><svg style="position:absolute;left:103px;top:305px;" width="14" height="14" viewBox="0 0 14 14"><rect x="0.65" y="0.65" width="12.7" height="12.7" rx="2.4" fill="none" stroke="#6f797f" stroke-width="1.3"/><path d="M1 7.3 H13" stroke="#5b676e" stroke-width="1"/></svg><svg style="position:absolute;left:119px;top:306px;" width="12" height="12.5" viewBox="0 0 12 12.5"><defs><linearGradient id="cg" x1="0" y1="0" x2="1" y2="1"><stop offset="0" stop-color="#c9ccd2"/><stop offset="0.55" stop-color="#eceef0"/><stop offset="1" stop-color="#fdfdfd"/></linearGradient></defs><rect x="0.5" y="0.5" width="11" height="11.5" fill="#fafafa" stroke="#a0a2a4" stroke-width="1"/><rect x="2" y="2" width="8" height="8.5" fill="url(#cg)"/></svg><svg style="position:absolute;left:132px;top:305px;" width="16" height="16" viewBox="0 0 16 16"><path d="M0.6 14.5 V1.6 Q0.6 0.6 1.6 0.6 H5.8 L7.6 2.9 H14.4 V14.5 Z" fill="none" stroke="#4b5b68" stroke-width="1.15" stroke-linejoin="round"/><path d="M5.4 0.1 H13.8 Q14.9 0.1 14.9 1.2 V3.5 H7.3 Z" fill="#4b5b68"/></svg><div style="position:absolute;left:150px;top:307.5px;font-size:11px;font-weight:400;color:#1b1b1b;white-space:nowrap;line-height:1;letter-spacing:-0.15px">project-2-4</div><svg style="position:absolute;left:155px;top:322px;" width="12" height="12.5" viewBox="0 0 12 12.5"><defs><linearGradient id="cg" x1="0" y1="0" x2="1" y2="1"><stop offset="0" stop-color="#c9ccd2"/><stop offset="0.55" stop-color="#eceef0"/><stop offset="1" stop-color="#fdfdfd"/></linearGradient></defs><rect x="0.5" y="0.5" width="11" height="11.5" fill="#fafafa" stroke="#a0a2a4" stroke-width="1"/><rect x="2" y="2" width="8" height="8.5" fill="url(#cg)"/></svg><svg style="position:absolute;left:169px;top:322px;" width="14" height="14" viewBox="0 0 14 14"><path d="M0.8 7 V0.8 H9 L13.2 5 V7" fill="none" stroke="#4b5b68" stroke-width="1.5"/><path d="M8.5 0 L14 5.5 H8.5 Z" fill="#4b5b68"/><rect x="0" y="6" width="14" height="7.5" rx="1" fill="#c8102e"/><text x="7" y="12.4" font-family="Liberation Sans" font-weight="700" font-size="6.6" fill="#fff" text-anchor="middle">PDF</text></svg><div style="position:absolute;left:186px;top:323.5px;font-size:11px;font-weight:400;color:#1b1b1b;white-space:nowrap;line-height:1;letter-spacing:-0.15px">file-2-4.pdf</div><svg style="position:absolute;left:103px;top:337px;" width="14" height="14" viewBox="0 0 14 14"><rect x="0.65" y="0.65" width="12.7" height="12.7" rx="2.4" fill="none" stroke="#6f797f" stroke-width="1.3"/><path d="M1 7.3 H13" stroke="#5b676e" stroke-width="1"/></svg><svg style="position:absolute;left:119px;top:338px;" width="12" height="12.5" viewBox="0 0 12 12.5"><defs><linearGradient id="cg" x1="0" y1="0" x2="1" y2="1"><stop offset="0" stop-color="#c9ccd2"/><stop offset="0.55" stop-color="#eceef0"/><stop offset="1" stop-color="#fdfdfd"/></linearGradient></defs><rect x="0.5" y="0.5" width="11" height="11.5" fill="#fafafa" stroke="#a0a2a4" stroke-width="1"/><rect x="2" y="2" width="8" height="8.5" fill="url(#cg)"/></svg><svg style="position:absolute;left:132px;top:337px;" width="16" height="16" viewBox="0 0 16 16"><path d="M0.6 14.5 V1.6 Q0.6 0.6 1.6 0.6 H5.8 L7.6 2.9 H14.4 V14.5 Z" fill="none" stroke="#4b5b68" stroke-width="1.15" stroke-linejoin="round"/><path d="M5.4 0.1 H13.8 Q14.9 0.1 14.9 1.2 V3.5 H7.3 Z" fill="#4b5b68"/></svg><div style="position:absolute;left:150px;top:339.5px;font-size:11px;font-weight:400;color:#1b1b1b;white-space:nowrap;line-height:1;letter-spacing:-0.15px">project-2-5</div><svg style="position:absolute;left:155px;top:354px;" width="12" height="12.5" viewBox="0 0 12 12.5"><defs><linearGradient id="cg" x1="0" y1="0" x2="1" y2="1"><stop offset="0" stop-color="#c9ccd2"/><stop offset="0.55" stop-color="#eceef0"/><stop offset="1" stop-color="#fdfdfd"/></linearGradient></defs><rect x="0.5" y="0.5" width="11" height="11.5" fill="#fafafa" stroke="#a0a2a4" stroke-width="1"/><rect x="2" y="2" width="8" height="8.5" fill="url(#cg)"/></svg><svg style="position:absolute;left:169px;top:354px;" width="14" height="14" viewBox="0 0 14 14"><path d="M0.8 7 V0.8 H9 L13.2 5 V7" fill="none" stroke="#4b5b68" stroke-width="1.5"/><path d="M8.5 0 L14 5.5 H8.5 Z" fill="#4b5b68"/><rect x="0" y="6" width="14" height="7.5" rx="1" fill="#c8102e"/><text x="7" y="12.4" font-family="Liberation Sans" font-weight="700" font-size="6.6" fill="#fff" text-anchor="middle">PDF</text></svg><div style="position:absolute;left:186px;top:355.5px;font-size:11px;font-weight:400;color:#1b1b1b;white-space:nowrap;line-height:1;letter-spacing:-0.15px">file-2-5-1.pdf</div><svg style="position:absolute;left:155px;top:370px;" width="12" height="12.5" viewBox="0 0 12 12.5"><defs><linearGradient id="cg" x1="0" y1="0" x2="1" y2="1"><stop offset="0" stop-color="#c9ccd2"/><stop offset="0.55" stop-color="#eceef0"/><stop offset="1" stop-color="#fdfdfd"/></linearGradient></defs><rect x="0.5" y="0.5" width="11" height="11.5" fill="#fafafa" stroke="#a0a2a4" stroke-width="1"/><rect x="2" y="2" width="8" height="8.5" fill="url(#cg)"/></svg><svg style="position:absolute;left:169px;top:370px;" width="14" height="14" viewBox="0 0 14 14"><path d="M0.8 7 V0.8 H9 L13.2 5 V7" fill="none" stroke="#4b5b68" stroke-width="1.5"/><path d="M8.5 0 L14 5.5 H8.5 Z" fill="#4b5b68"/><rect x="0" y="6" width="14" height="7.5" rx="1" fill="#c8102e"/><text x="7" y="12.4" font-family="Liberation Sans" font-weight="700" font-size="6.6" fill="#fff" text-anchor="middle">PDF</text></svg><div style="position:absolute;left:186px;top:371.5px;font-size:11px;font-weight:400;color:#1b1b1b;white-space:nowrap;line-height:1;letter-spacing:-0.15px">file-2-5-2.pdf</div></div><div style="position:absolute;left:426px;top:130px;font-size:10px;font-weight:700;color:#111;white-space:nowrap;line-height:1;letter-spacing:0.6px;-webkit-text-stroke:0.3px #111">Результат</div><div style="position:absolute;left:422px;top:147px;width:262px;height:168px;box-sizing:border-box;border:1px solid #56646e"></div><div style="position:absolute;left:577px;top:147px;width:1px;height:168px;background:#56646e"></div><div style="position:absolute;left:422px;top:175px;width:262px;height:1px;background:#56646e"></div><div style="position:absolute;left:422px;top:203px;width:262px;height:1px;background:#56646e"></div><div style="position:absolute;left:422px;top:235px;width:262px;height:1px;background:#56646e"></div><div style="position:absolute;left:422px;top:263px;width:262px;height:1px;background:#56646e"></div><div style="position:absolute;left:422px;top:289px;width:262px;height:1px;background:#56646e"></div><div style="position:absolute;left:426px;top:325px;font-size:10px;font-weight:700;color:#111;white-space:nowrap;line-height:1;letter-spacing:-0.45px;-webkit-text-stroke:0.3px #111">Материал</div><div style="position:absolute;left:422px;top:341px;width:262px;height:127px;box-sizing:border-box;border:1px solid #56646e"></div><div style="position:absolute;left:577px;top:341px;width:1px;height:127px;background:#56646e"></div><div style="position:absolute;left:422px;top:366px;width:262px;height:1px;background:#56646e"></div><div style="position:absolute;left:422px;top:391px;width:262px;height:1px;background:#56646e"></div><div style="position:absolute;left:422px;top:416px;width:262px;height:1px;background:#56646e"></div><div style="position:absolute;left:422px;top:442px;width:262px;height:1px;background:#56646e"></div><svg style="position:absolute;left:438px;top:154px;" width="16" height="16" viewBox="0 0 16 16"><path d="M0.6 14.3 V1.6 Q0.6 0.6 1.6 0.6 H5.8 L7.6 2.9 H14.4 V14.3 Z" fill="none" stroke="#4b5b68" stroke-width="1.3" stroke-linejoin="round"/><path d="M5.4 0.1 H13.8 Q14.9 0.1 14.9 1.2 V3.5 H7.3 Z" fill="#4b5b68"/></svg><div style="position:absolute;left:462px;top:157px;font-size:11px;font-weight:400;color:#1b1b1b;white-space:nowrap;line-height:1;">Папок</div><div style="position:absolute;left:578px;top:157px;font-size:11px;font-weight:400;color:#1b1b1b;white-space:nowrap;line-height:1;width:105px;text-align:center">6</div><svg style="position:absolute;left:438px;top:181px;" width="16" height="16" viewBox="0 0 16 16"><path d="M0.7 0.7 H9.5 L14.3 5.5 V14.3 H0.7 Z" fill="none" stroke="#4b5b68" stroke-width="1.4" stroke-linejoin="round"/><path d="M9 0 L15 6 H9 Z" fill="#4b5b68"/></svg><div style="position:absolute;left:462px;top:184px;font-size:11px;font-weight:400;color:#1b1b1b;white-space:nowrap;line-height:1;">Файлов</div><div style="position:absolute;left:578px;top:184px;font-size:11px;font-weight:400;color:#1b1b1b;white-space:nowrap;line-height:1;width:105px;text-align:center">9</div><svg style="position:absolute;left:472px;top:207px;" width="22" height="22" viewBox="0 0 22 22"><rect x="1.3" y="1.3" width="19.4" height="19.4" rx="3" fill="none" stroke="#b04040" stroke-width="1.8"/><text x="11" y="13.6" font-family="Liberation Sans" font-weight="700" font-size="7" fill="#b03a3a" stroke="#b03a3a" stroke-width="0.3" text-anchor="middle">PDF</text></svg><div style="position:absolute;left:578px;top:214px;font-size:11px;font-weight:400;color:#1b1b1b;white-space:nowrap;line-height:1;width:105px;text-align:center">9</div><svg style="position:absolute;left:439px;top:241px;" width="13" height="17" viewBox="0 0 13 17"><rect x="1.5" y="1.5" width="10" height="13.6" rx="2" fill="none" stroke="#4b5b68" stroke-width="1.55"/></svg><div style="position:absolute;left:462px;top:245px;font-size:11px;font-weight:400;color:#1b1b1b;white-space:nowrap;line-height:1;">Страниц</div><div style="position:absolute;left:578px;top:245px;font-size:11px;font-weight:400;color:#1b1b1b;white-space:nowrap;line-height:1;width:105px;text-align:center">224</div><svg style="position:absolute;left:472px;top:270px;" width="16" height="16" viewBox="0 0 16 16"><rect x="1.3" y="0.9" width="13.4" height="13.6" rx="2" fill="none" stroke="#4b5b68" stroke-width="1.5"/><path d="M8 0.9 H12.7 Q14.7 0.9 14.7 2.9 V12.5 Q14.7 14.5 12.7 14.5 H8 Z" fill="#4b5b68"/></svg><div style="position:absolute;left:494px;top:272px;font-size:11px;font-weight:400;color:#1b1b1b;white-space:nowrap;line-height:1;">Черно-белых</div><div style="position:absolute;left:578px;top:272px;font-size:11px;font-weight:400;color:#1b1b1b;white-space:nowrap;line-height:1;width:105px;text-align:center">0</div><svg style="position:absolute;left:472px;top:295px;" width="16" height="16" viewBox="0 0 16 16"><rect x="1.3" y="1.2" width="13.4" height="13.4" rx="2" fill="none" stroke="#4b5b68" stroke-width="1.5"/><circle cx="5.3" cy="5.2" r="2.2" fill="#9cc8f2"/><circle cx="10.7" cy="5.2" r="2.2" fill="#ee9ef0"/><circle cx="5.3" cy="10.6" r="2.2" fill="#f0c890"/><circle cx="10.7" cy="10.6" r="2.2" fill="#3f4e5c"/></svg><div style="position:absolute;left:494px;top:297px;font-size:11px;font-weight:400;color:#1b1b1b;white-space:nowrap;line-height:1;">Цветных</div><div style="position:absolute;left:578px;top:297px;font-size:11px;font-weight:400;color:#1b1b1b;white-space:nowrap;line-height:1;width:105px;text-align:center">224</div><svg style="position:absolute;left:427px;top:350px;" width="8" height="7" viewBox="0 0 8 7"><path d="M0 0 H8 L4 7 Z" fill="#000"/></svg><svg style="position:absolute;left:437px;top:346px;" width="17" height="17" viewBox="0 0 17 17"><g fill="#eeebdf" stroke="#4b5b68" stroke-width="1.35"><rect x="8.2" y="1.4" width="7.2" height="10" rx="1.6"/><rect x="4.9" y="3.3" width="7.3" height="10.2" rx="1.6"/><rect x="1.5" y="5.3" width="7.8" height="10.2" rx="1.6"/></g></svg><div style="position:absolute;left:462px;top:349px;font-size:11px;font-weight:400;color:#1b1b1b;white-space:nowrap;line-height:1;">Листовой</div><div style="position:absolute;left:578px;top:350px;font-size:11px;font-weight:400;color:#1b1b1b;white-space:nowrap;line-height:1;width:105px;text-align:center">206</div><svg style="position:absolute;left:471px;top:371px;" width="18" height="17" viewBox="0 0 18 17"><g fill="none" stroke="#4b5b68" stroke-width="1.4" stroke-linejoin="round"><path d="M2 9.5 L7.5 2 L16.5 5.5 L11.5 13.5 Z"/><path d="M2 9.5 L2.5 12 L11.5 15.5 L16.5 8 L16.5 5.5"/><path d="M11.5 13.5 L11.5 15.5"/></g></svg><div style="position:absolute;left:494px;top:374px;font-size:11px;font-weight:400;color:#1b1b1b;white-space:nowrap;line-height:1;">A4</div><div style="position:absolute;left:578px;top:375px;font-size:11px;font-weight:400;color:#1b1b1b;white-space:nowrap;line-height:1;width:105px;text-align:center">206</div><svg style="position:absolute;left:427px;top:400px;" width="8" height="7" viewBox="0 0 8 7"><path d="M0 0 H8 L4 7 Z" fill="#000"/></svg><svg style="position:absolute;left:437px;top:396px;" width="17" height="17" viewBox="0 0 17 17"><circle cx="8.3" cy="8.3" r="6.8" fill="none" stroke="#4b5b68" stroke-width="1.5"/><circle cx="8.3" cy="8.3" r="2.6" fill="#4b5b68"/></svg><div style="position:absolute;left:462px;top:399px;font-size:11px;font-weight:400;color:#1b1b1b;white-space:nowrap;line-height:1;">Рулонный</div><div style="position:absolute;left:578px;top:400px;font-size:11px;font-weight:400;color:#1b1b1b;white-space:nowrap;line-height:1;width:105px;text-align:center">18</div><svg style="position:absolute;left:471px;top:422px;" width="17" height="16" viewBox="0 0 17 16"><g transform="translate(1.4,0.8) scale(0.94)"><g fill="none" stroke="#4b5b68" stroke-width="1.45"><ellipse cx="4.6" cy="10.9" rx="3.6" ry="3.9" transform="rotate(45 4.6 10.9)"/><path d="M2.2 8.3 L9.8 1.5 A3.6 3.9 45 0 1 14.8 6.6 L7.4 13.5"/></g><circle cx="4.6" cy="10.9" r="1.3" fill="#4b5b68"/></g></svg><div style="position:absolute;left:494px;top:424px;font-size:11px;font-weight:400;color:#1b1b1b;white-space:nowrap;line-height:1;">A1 (594 мм)</div><div style="position:absolute;left:578px;top:425px;font-size:11px;font-weight:400;color:#1b1b1b;white-space:nowrap;line-height:1;width:105px;text-align:center">7.6 м</div><svg style="position:absolute;left:471px;top:448px;" width="17" height="16" viewBox="0 0 17 16"><g transform="translate(1.4,0.8) scale(0.94)"><g fill="none" stroke="#4b5b68" stroke-width="1.45"><ellipse cx="4.6" cy="10.9" rx="3.6" ry="3.9" transform="rotate(45 4.6 10.9)"/><path d="M2.2 8.3 L9.8 1.5 A3.6 3.9 45 0 1 14.8 6.6 L7.4 13.5"/></g><circle cx="4.6" cy="10.9" r="1.3" fill="#4b5b68"/></g></svg><div style="position:absolute;left:494px;top:449px;font-size:11px;font-weight:400;color:#1b1b1b;white-space:nowrap;line-height:1;letter-spacing:-0.25px">A0_Plus (914 мм)</div><div style="position:absolute;left:578px;top:450px;font-size:11px;font-weight:400;color:#1b1b1b;white-space:nowrap;line-height:1;width:105px;text-align:center">10.7 м</div><div style="position:absolute;left:7px;top:492px;width:736px;height:27px;background:#abbcbf"></div><div style="position:absolute;left:7px;top:519px;width:736px;height:15px;background:#3f4e5c"></div><div style="position:absolute;left:30px;top:496px;width:92px;padding-right:0px;height:19px;background:#3f4e5c;border-radius:4px;color:#ecebdc;font-size:10px;font-weight:700;line-height:19px;text-align:center">Сохранить</div><div style="position:absolute;left:130px;top:496px;width:92px;padding-right:0px;height:19px;background:#3f4e5c;border-radius:4px;color:#ecebdc;font-size:10px;font-weight:700;line-height:19px;text-align:center">Разделить</div><div style="position:absolute;left:579px;top:496px;width:90px;padding-right:2px;height:19px;background:#3f4e5c;border-radius:4px;color:#ecebdc;font-size:10px;font-weight:700;line-height:19px;text-align:center">Экспорт</div><div style="position:absolute;left:309px;top:501px;font-size:11px;font-weight:400;color:#1e1e1e;white-space:nowrap;line-height:1;">Экспортировать как</div><div style="position:absolute;left:418px;top:496px;width:153px;height:18px;box-sizing:border-box;border:1px solid #8c9294;background:#eef5fd"></div><div style="position:absolute;left:422px;top:501px;font-size:11px;font-weight:400;color:#111;white-space:nowrap;line-height:1;">Документ Word</div><div style="position:absolute;left:558px;top:497px;width:12px;height:16px;box-sizing:border-box;background:#f0f0ec;border-right:1px solid #a0a4a6;border-bottom:1px solid #a0a4a6"></div><svg style="position:absolute;left:560px;top:502px;" width="7" height="5" viewBox="0 0 7 5"><path d="M0.5 0.5 H6.5 L3.5 4.2 Z" fill="#000"/></svg><div style="position:absolute;left:594px;top:521px;font-size:9.5px;font-weight:700;color:#ecebdc;white-space:nowrap;line-height:1;letter-spacing:-0.2px">© Андрей Михайлов, 2016-2022</div>
</body></html>
